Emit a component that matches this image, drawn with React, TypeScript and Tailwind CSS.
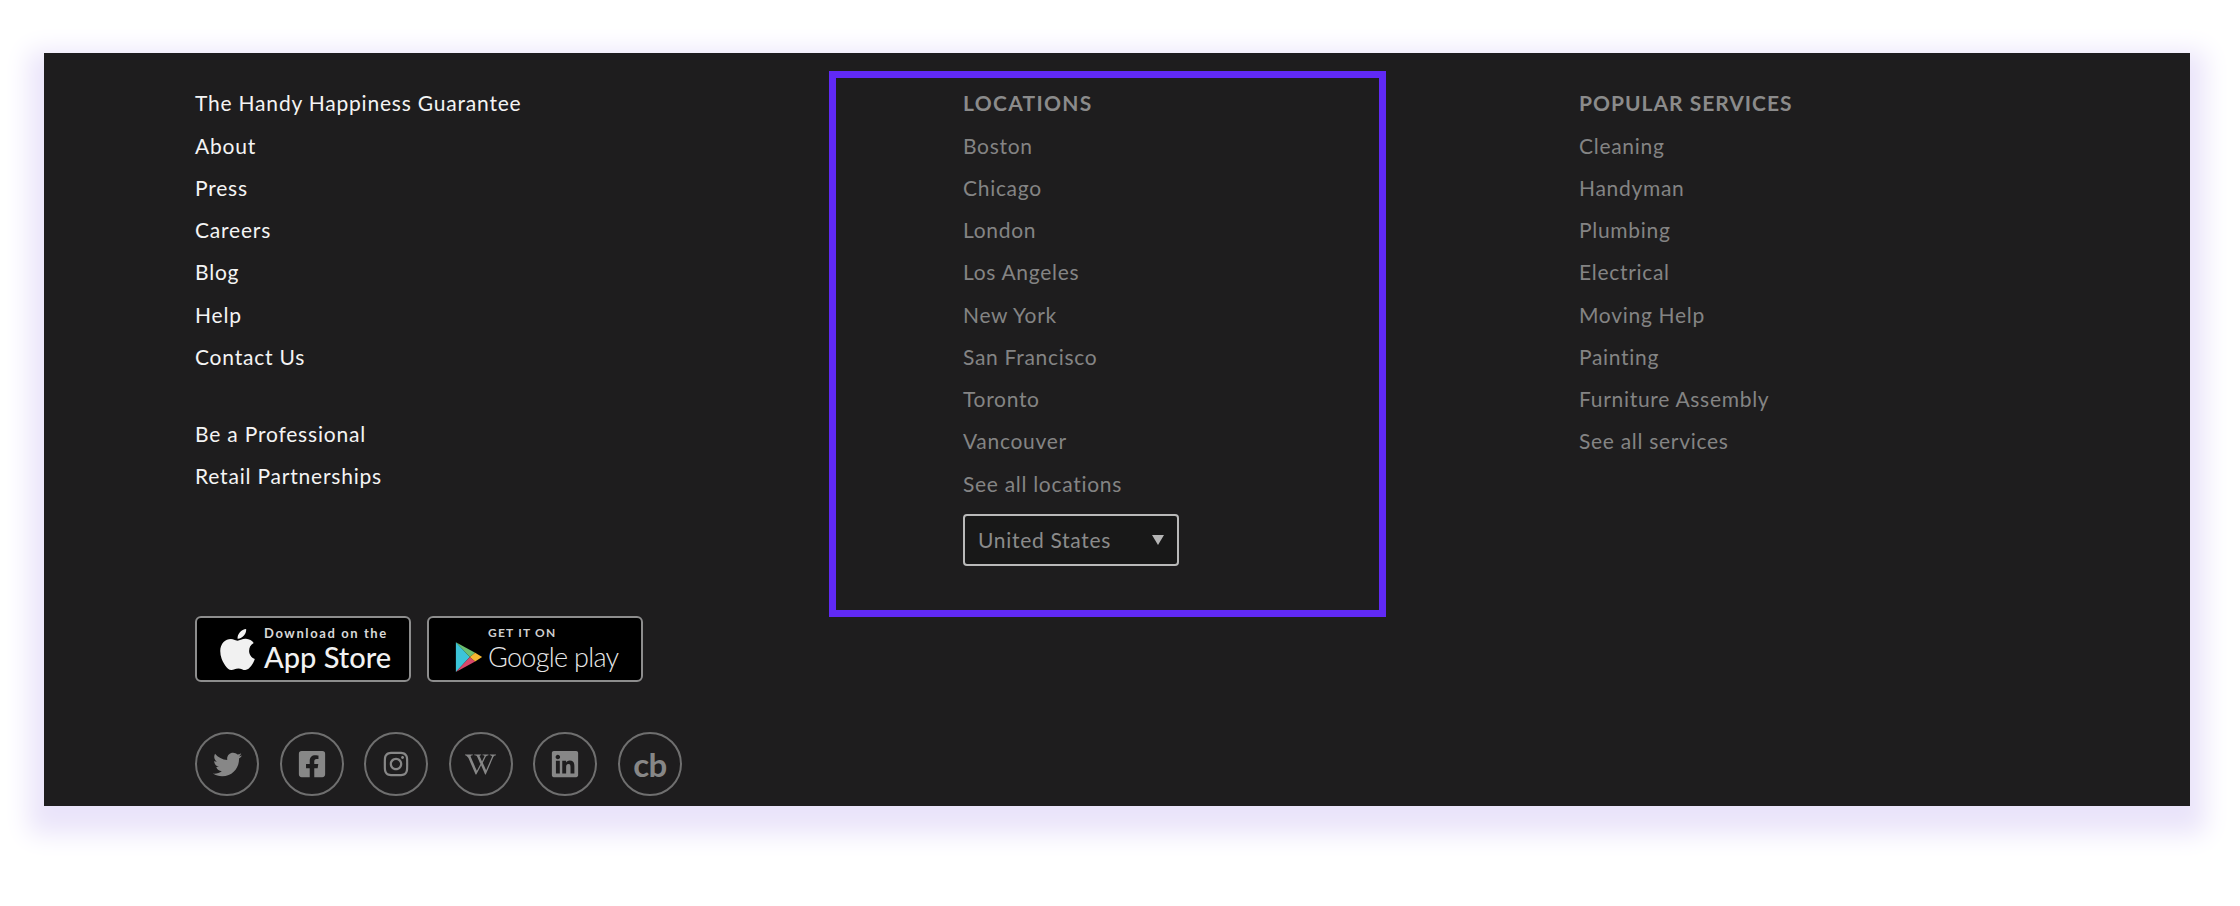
import { FaApple, FaFacebookSquare, FaInstagram, FaLinkedin, FaTwitter, FaWikipediaW } from "react-icons/fa";

const company = ["The Handy Happiness Guarantee", "About", "Press", "Careers", "Blog", "Help", "Contact Us"];
const partners = ["Be a Professional", "Retail Partnerships"];
const locations = ["Boston", "Chicago", "London", "Los Angeles", "New York", "San Francisco", "Toronto", "Vancouver", "See all locations"];
const services = ["Cleaning", "Handyman", "Plumbing", "Electrical", "Moving Help", "Painting", "Furniture Assembly", "See all services"];

function Row({ children, className }: { children: React.ReactNode; className: string }) {
  return <div className={`flex h-[42.25px] items-center whitespace-nowrap text-[21px] ${className}`}>{children}</div>;
}

function PlayIcon() {
  return (
    <svg viewBox="0 0 32 36" className="h-[32px] w-[28px]">
      <path d="M1 1 L17 18 L1 35 Z" fill="#3cc4d8" />
      <path d="M1 1 L23 13 L17 18 Z" fill="#6cc070" />
      <path d="M1 35 L23 23 L17 18 Z" fill="#d8486a" />
      <path d="M23 13 L31 18 L23 23 L17 18 Z" fill="#f5b731" />
    </svg>
  );
}

function Social({ children }: { children: React.ReactNode }) {
  return (
    <div className="flex h-[64px] w-[64px] items-center justify-center rounded-full border-2 border-[#6f6f6f] text-[#878787]">
      {children}
    </div>
  );
}

export default function App() {
  return (
    <div className="h-[906px] w-[2240px] bg-white pl-[44px] pt-[53px] font-['Lato',sans-serif]">
      <div className="flex h-[753px] w-[2146px] bg-[#1e1d1e] pl-[151px] shadow-[0_13px_24px_15px_rgba(234,228,250,1)]">
        <div className="flex w-[634px] flex-col pt-[29px]">
          {company.map((t) => <Row key={t} className="tracking-[0.8px] text-[#f4f4f4]">{t}</Row>)}
          <div className="mt-[35px]">
            {partners.map((t) => <Row key={t} className="tracking-[0.8px] text-[#f4f4f4]">{t}</Row>)}
          </div>

          <div className="mt-[119px] flex gap-[16px]">
            <div className="flex h-[66px] w-[216px] items-center rounded-[6px] border-2 border-[#8d8d8d] bg-black pl-[17px] text-[#f1f1f1]">
              <FaApple className="text-[47px]" />
              <div className="ml-[3px] flex flex-col">
                <span className="text-[13px] font-bold leading-[15px] tracking-[1.6px] text-[#d8d8d8]">Download on the</span>
                <span className="text-[29px] font-medium leading-[31px]">App Store</span>
              </div>
            </div>
            <div className="flex h-[66px] w-[216px] items-center rounded-[6px] border-2 border-[#8d8d8d] bg-black pl-[26px] text-[#e8e8e8]">
              <div className="mt-[16px]"><PlayIcon /></div>
              <div className="ml-[5px] flex flex-col">
                <span className="text-[12px] font-bold leading-[14px] tracking-[1.2px] text-[#cfcfcf]">GET IT ON</span>
                <span className="text-[27px] font-light leading-[33px] tracking-[-0.7px]">Google play</span>
              </div>
            </div>
          </div>

          <div className="mt-[50px] flex gap-[20.6px]">
            <Social><FaTwitter className="text-[29px]" /></Social>
            <Social><FaFacebookSquare className="text-[30px]" /></Social>
            <Social><FaInstagram className="text-[28px]" /></Social>
            <Social><FaWikipediaW className="text-[31px]" /></Social>
            <Social><FaLinkedin className="text-[30px]" /></Social>
            <Social><span className="text-[33px] font-bold leading-none tracking-[-0.5px]">cb</span></Social>
          </div>
        </div>

        <div className="mt-[18px] h-[546px] w-[557px] border-[7px] border-[#6029f5] pl-[127px] pt-[4px]">
          <Row className="font-bold tracking-[1.3px] text-[#8b8b8b]">LOCATIONS</Row>
          {locations.map((t) => <Row key={t} className="tracking-[0.7px] text-[#848484]">{t}</Row>)}
          <div className="mt-[9px] flex h-[52px] w-[216px] items-center justify-between rounded-[4px] border-2 border-[#b9b9b9] bg-[#181818] pl-[13px] pr-[13px]">
            <span className="text-[21px] tracking-[0.7px] text-[#8b8b8b]">United States</span>
            <span className="h-0 w-0 border-x-[6px] border-t-[10px] border-x-transparent border-t-[#b5b5b5]" />
          </div>
        </div>

        <div className="ml-[193px] flex flex-col pt-[29px]">
          <Row className="font-bold tracking-[1px] text-[#8b8b8b]">POPULAR SERVICES</Row>
          {services.map((t) => <Row key={t} className="tracking-[0.7px] text-[#848484]">{t}</Row>)}
        </div>
      </div>
    </div>
  );
}
